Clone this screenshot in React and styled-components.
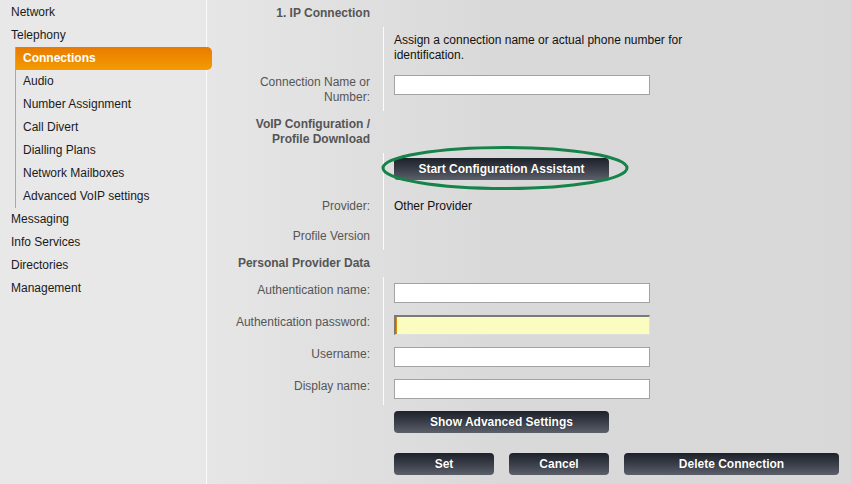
import React from 'react';
import styled, { createGlobalStyle } from 'styled-components';

const GlobalStyle = createGlobalStyle`
  html, body {
    margin: 0;
    padding: 0;
    height: 100%;
  }
  body {
    font-family: "Liberation Sans", Arial, sans-serif;
    font-size: 12px;
    line-height: 15px;
    color: #111;
  }
`;

const Page = styled.div`
  display: flex;
  height: 484px;
  overflow: hidden;
`;

const Sidebar = styled.nav`
  width: 206px;
  flex: none;
  padding-top: 1px;
  background: #e8e8e8;
  border-right: 1px solid #fafafa;
  position: relative;
  z-index: 1;
`;

const MenuItem = styled.div`
  height: 23px;
  line-height: 23px;
  padding-left: 11px;
  color: #1a1a22;
`;

const SubMenu = styled.div`
  margin-left: 15px;
  border-left: 1px solid #a8a8a8;
`;

const SubItem = styled.div`
  height: 23px;
  line-height: 22px;
  padding-left: 7px;
  width: 196px;
  box-sizing: border-box;
  color: ${p => (p.$active ? '#fff' : '#1a1a22')};
  font-weight: ${p => (p.$active ? 'bold' : 'normal')};
  border-radius: 0 5px 5px 0;
  background: ${p => (p.$active ? 'linear-gradient(to bottom, #e97a00, #f39c00)' : 'none')};
`;

const Main = styled.main`
  flex: 1;
  background: linear-gradient(to right, #e6e6e6, #d9d9d9 45%, #d8d8d8);
`;

const Row = styled.div`
  display: grid;
  grid-template-columns: 163px 1fr;
  & > div {
    padding-top: ${p => p.$pt ?? 6}px;
    padding-bottom: ${p => p.$pb ?? 6}px;
  }
`;

const Label = styled.div`
  text-align: right;
  color: #555;
  font-weight: ${p => (p.$head ? 'bold' : 'normal')};
`;

const Value = styled.div`
  margin-left: 13px;
  padding-left: 10px;
  border-left: 1px solid ${p => (p.$line ? '#fcfcfc' : 'transparent')};
  display: flex;
  align-items: flex-start;
  gap: 15px;
  ${p => (p.$gapTop ? `margin-top: ${p.$gapTop}px;` : '')}
`;

const Note = styled.span`
  max-width: 330px;
`;

const Input = styled.input`
  box-sizing: border-box;
  width: 256px;
  height: 20px;
  margin: 0;
  padding: 0 2px;
  font: inherit;
  background: ${p => (p.$highlight ? '#fafcc0' : '#fff')};
  border: 1px solid #a2a2a2;
  ${p =>
    p.$highlight &&
    `
    border-width: 2px 1px 1px 2px;
    border-color: #7a7a7a #e0e0e0 #e0e0e0 #7a7a7a;
    box-shadow: inset 1px 0 0 #e08a00;
  `}
`;

const Button = styled.button`
  display: block;
  box-sizing: border-box;
  width: ${p => p.$w}px;
  height: 22px;
  margin: 0;
  padding: 0;
  border: none;
  border-radius: 4px;
  background: linear-gradient(to bottom, #1d212a, #3a3e48 50%, #5b606a);
  color: #fff;
  font: bold 12px "Liberation Sans", Arial, sans-serif;
  text-shadow: 0 0 1px rgba(0, 0, 0, 0.6);
  cursor: pointer;
`;

const Marked = styled.div`
  position: relative;
`;

const Ring = styled.svg`
  position: absolute;
  left: -13px;
  top: -13px;
  pointer-events: none;
`;

const subItems = [
  'Connections',
  'Audio',
  'Number Assignment',
  'Call Divert',
  'Dialling Plans',
  'Network Mailboxes',
  'Advanced VoIP settings',
];

const inputRows = [
  { label: 'Authentication name:' },
  { label: 'Authentication password:', highlight: true },
  { label: 'Username:' },
  { label: 'Display name:' },
];

export default function App() {
  return (
    <Page>
      <GlobalStyle />
      <Sidebar>
        <MenuItem>Network</MenuItem>
        <MenuItem>Telephony</MenuItem>
        <SubMenu>
          {subItems.map((name, i) => (
            <SubItem key={name} $active={i === 0}>{name}</SubItem>
          ))}
        </SubMenu>
        <MenuItem>Messaging</MenuItem>
        <MenuItem>Info Services</MenuItem>
        <MenuItem>Directories</MenuItem>
        <MenuItem>Management</MenuItem>
      </Sidebar>

      <Main>
        <Row $pt={6} $pb={6}>
          <Label $head>1. IP Connection</Label>
          <Value />
        </Row>
        <Row>
          <Label />
          <Value $line>
            <Note>Assign a connection name or actual phone number for identification.</Note>
          </Value>
        </Row>
        <Row>
          <Label>Connection Name or<br />Number:</Label>
          <Value $line><Input type="text" /></Value>
        </Row>
        <Row>
          <Label $head>VoIP Configuration /<br />Profile Download</Label>
          <Value />
        </Row>
        <Row $pt={5} $pb={13}>
          <Label />
          <Value $line>
            <Marked>
              <Button $w={215}>Start Configuration Assistant</Button>
              <Ring width="248" height="46" viewBox="0 0 248 46">
                <ellipse cx="124" cy="23" rx="122" ry="20.5" fill="none" stroke="#15834a" strokeWidth="3" />
              </Ring>
            </Marked>
          </Value>
        </Row>
        <Row $pb={9}>
          <Label>Provider:</Label>
          <Value $line>Other Provider</Value>
        </Row>
        <Row>
          <Label>Profile Version</Label>
          <Value $line />
        </Row>
        <Row>
          <Label $head>Personal Provider Data</Label>
          <Value />
        </Row>
        {inputRows.map(r => (
          <Row key={r.label}>
            <Label>{r.label}</Label>
            <Value $line>
              <Input type={r.highlight ? 'password' : 'text'} $highlight={r.highlight} />
            </Value>
          </Row>
        ))}
        <Row $pt={6} $pb={0}>
          <Label />
          <Value><Button $w={215}>Show Advanced Settings</Button></Value>
        </Row>
        <Row $pt={0} $pb={0}>
          <Label />
          <Value $gapTop={20}>
            <Button $w={100}>Set</Button>
            <Button $w={100}>Cancel</Button>
            <Button $w={215}>Delete Connection</Button>
          </Value>
        </Row>
      </Main>
    </Page>
  );
}
